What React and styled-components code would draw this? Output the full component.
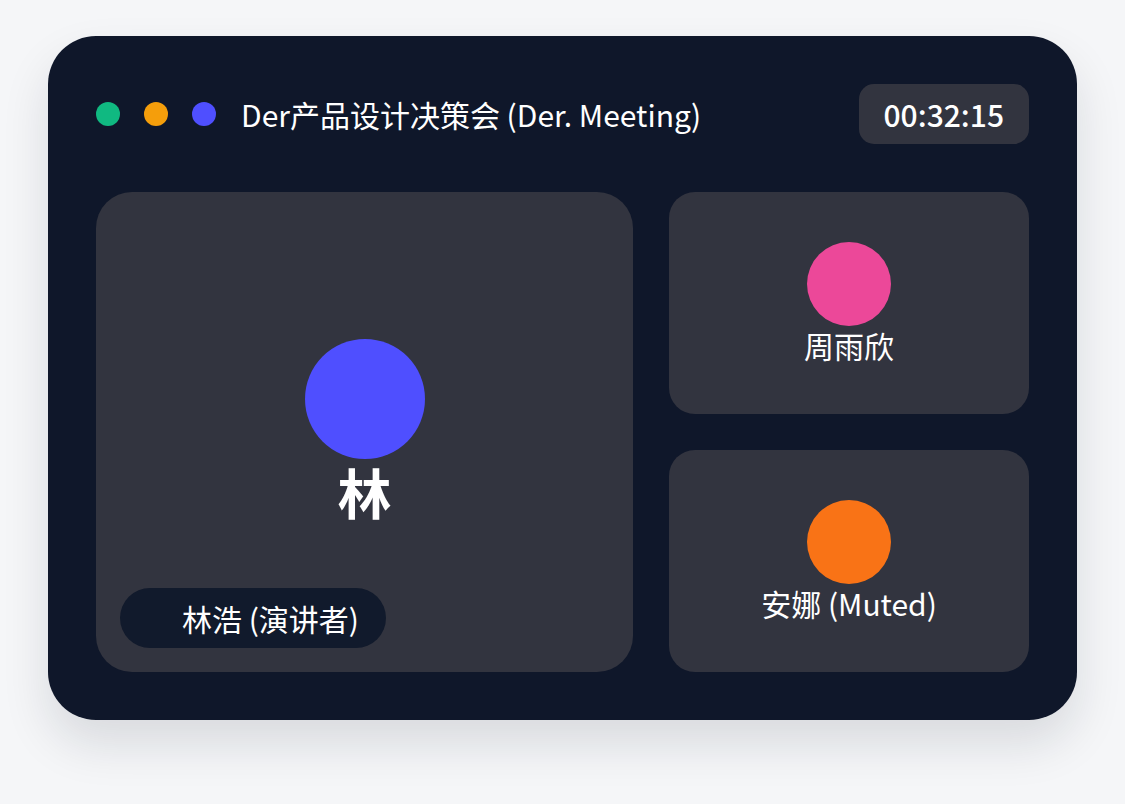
import styled, { createGlobalStyle } from "styled-components";

const GlobalStyle = createGlobalStyle`
  html, body {
    margin: 0;
    padding: 0;
    background: #f5f6f8;
    font-family: "Noto Sans CJK SC", "Noto Sans", sans-serif;
  }
`;

const Page = styled.div`
  width: 1125px;
  height: 804px;
  padding: 36px 48px 0 48px;
  box-sizing: border-box;
`;

const Card = styled.div`
  width: 1029px;
  height: 684px;
  box-sizing: border-box;
  padding: 48px;
  background: #0f172a;
  border-radius: 48px;
  box-shadow: 0 24px 48px rgba(15, 23, 42, 0.12);
  display: flex;
  flex-direction: column;
  gap: 48px;
`;

const Header = styled.div`
  display: flex;
  align-items: center;
  height: 60px;
`;

const Dots = styled.div`
  display: flex;
  gap: 24px;
  margin-right: 25px;
`;

const Dot = styled.span`
  width: 24px;
  height: 24px;
  border-radius: 50%;
  background: ${(p) => p.$color};
`;

const Title = styled.h1`
  margin: 0;
  flex: 1;
  color: #ffffff;
  font-size: 30px;
  font-weight: 400;
  line-height: 40px;
`;

const Timer = styled.div`
  height: 60px;
  padding: 0 25px;
  display: flex;
  align-items: center;
  border-radius: 15px;
  background: #32343f;
  color: #ffffff;
  font-size: 30px;
  font-weight: 500;
`;

const Grid = styled.div`
  flex: 1;
  display: grid;
  grid-template-columns: 537px 360px;
  grid-template-rows: 1fr 1fr;
  column-gap: 36px;
  row-gap: 36px;
`;

const Tile = styled.div`
  position: relative;
  background: #32343f;
  border-radius: ${(p) => (p.$main ? "36px" : "26px")};
  grid-row: ${(p) => (p.$main ? "1 / span 2" : "auto")};
  display: flex;
  flex-direction: column;
  align-items: center;
  justify-content: center;
`;

const Avatar = styled.div`
  width: ${(p) => p.$size}px;
  height: ${(p) => p.$size}px;
  border-radius: 50%;
  background: ${(p) => p.$color};
`;

const Initial = styled.div`
  color: #ffffff;
  font-size: 54px;
  font-weight: 700;
  line-height: 66px;
`;

const Name = styled.div`
  color: #ffffff;
  font-size: 30px;
  line-height: 38px;
`;

const Badge = styled.div`
  position: absolute;
  left: 24px;
  bottom: 24px;
  height: 60px;
  padding: 0 27px 0 62px;
  display: flex;
  align-items: center;
  border-radius: 30px;
  background: #111a2c;
  color: #ffffff;
  font-size: 30px;
`;

export default function App() {
  return (
    <>
      <GlobalStyle />
      <Page>
        <Card>
          <Header>
            <Dots>
              <Dot $color="#10b981" />
              <Dot $color="#f59e0b" />
              <Dot $color="#4f4fff" />
            </Dots>
            <Title>Der产品设计决策会 (Der. Meeting)</Title>
            <Timer>00:32:15</Timer>
          </Header>
          <Grid>
            <Tile $main>
              <Avatar $size={120} $color="#4f4fff" />
              <Initial>林</Initial>
              <Badge>林浩 (演讲者)</Badge>
            </Tile>
            <Tile>
              <Avatar $size={84} $color="#ec4899" />
              <Name>周雨欣</Name>
            </Tile>
            <Tile>
              <Avatar $size={84} $color="#f97316" />
              <Name>安娜 (Muted)</Name>
            </Tile>
          </Grid>
        </Card>
      </Page>
    </>
  );
}
